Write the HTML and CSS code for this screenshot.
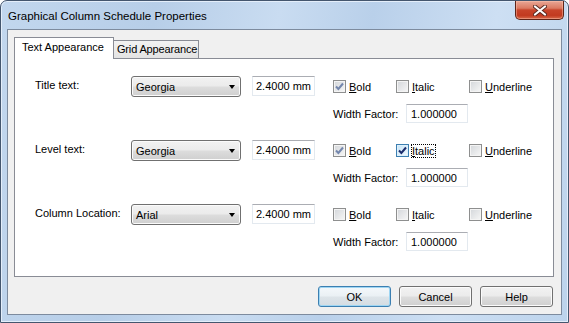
FILE: index.html
```html
<!DOCTYPE html>
<html lang="en">
<head>
    <meta charset="UTF-8">
    <title>Graphical Column Schedule Properties</title>
    <link rel="stylesheet" href="styles.css">
</head>
<body>
<div class="window">
    <div class="titlebar">
        <span class="title">Graphical Column Schedule Properties</span>
        <div class="close">
            <svg width="14" height="11" viewBox="0 0 14 11">
                <path d="M2 1.5 L12 9.5 M12 1.5 L2 9.5" stroke="#5a2a22" stroke-width="4" stroke-linecap="round"/>
                <path d="M2 1.5 L12 9.5 M12 1.5 L2 9.5" stroke="#fff" stroke-width="2.2" stroke-linecap="round"/>
            </svg>
        </div>
    </div>

    <div class="client">
        <div class="tabs">
            <div class="tab active">Text Appearance</div>
            <div class="tab">Grid Appearance</div>
        </div>

        <div class="panel">
            <div class="group">
                <div class="label">Title text:</div>
                <div class="combo">Georgia<span class="arrow"></span></div>
                <div class="textbox size">2.4000 mm</div>
                <div class="opts">
                    <div class="checks">
                        <div class="check bold"><span class="box checked grey"><svg width="11" height="11" viewBox="0 0 11 11"><path d="M2 5.5 L4.4 8 L9 2.5" fill="none" stroke-width="2"/></svg></span><span><u>B</u>old</span></div>
                        <div class="check italic"><span class="box"></span><span><u>I</u>talic</span></div>
                        <div class="check"><span class="box"></span><span><u>U</u>nderline</span></div>
                    </div>
                    <div class="factor">
                        <span class="factor-label">Width Factor:</span>
                        <div class="textbox factor-box">1.000000</div>
                    </div>
                </div>
            </div>

            <div class="group">
                <div class="label">Level text:</div>
                <div class="combo">Georgia<span class="arrow"></span></div>
                <div class="textbox size">2.4000 mm</div>
                <div class="opts">
                    <div class="checks">
                        <div class="check bold"><span class="box checked grey"><svg width="11" height="11" viewBox="0 0 11 11"><path d="M2 5.5 L4.4 8 L9 2.5" fill="none" stroke-width="2"/></svg></span><span><u>B</u>old</span></div>
                        <div class="check italic"><span class="box checked hot"><svg width="11" height="11" viewBox="0 0 11 11"><path d="M2 5.5 L4.4 8 L9 2.5" fill="none" stroke-width="2"/></svg></span><span class="focus"><u>I</u>talic</span></div>
                        <div class="check"><span class="box"></span><span><u>U</u>nderline</span></div>
                    </div>
                    <div class="factor">
                        <span class="factor-label">Width Factor:</span>
                        <div class="textbox factor-box">1.000000</div>
                    </div>
                </div>
            </div>

            <div class="group">
                <div class="label">Column Location:</div>
                <div class="combo">Arial<span class="arrow"></span></div>
                <div class="textbox size">2.4000 mm</div>
                <div class="opts">
                    <div class="checks">
                        <div class="check bold"><span class="box"></span><span><u>B</u>old</span></div>
                        <div class="check italic"><span class="box"></span><span><u>I</u>talic</span></div>
                        <div class="check"><span class="box"></span><span><u>U</u>nderline</span></div>
                    </div>
                    <div class="factor">
                        <span class="factor-label">Width Factor:</span>
                        <div class="textbox factor-box">1.000000</div>
                    </div>
                </div>
            </div>
        </div>

        <div class="buttons">
            <button class="btn default">OK</button>
            <button class="btn">Cancel</button>
            <button class="btn">Help</button>
        </div>
    </div>
</div>
</body>
</html>
```

FILE: styles.css
```css
*{
    box-sizing: border-box;
}
body{
    margin: 0;
    width: 569px;
    height: 323px;
    font-family: "Liberation Sans", Arial, sans-serif;
    font-size: 11px;
    color: #000;
    background: #ffffff;
}
.window{
    width: 569px;
    height: 323px;
    display: flex;
    flex-direction: column;
    border: 1px solid #44566e;
    border-radius: 7px 7px 0 0;
    background: linear-gradient(100deg, #c2d7ee 0%, #b7cee8 25%, #c9dcf1 45%, #b9d0ea 60%, #cddff3 80%, #bcd3ec 100%);
    box-shadow: inset 0 0 0 1px #e4eefa;
}
.titlebar{
    height: 28px;
    display: flex;
    justify-content: space-between;
    align-items: flex-start;
    padding: 0 4px 0 7px;
}
.title{
    margin-top: 9px;
    font-size: 11.5px;
    color: #000;
}
.close{
    width: 49px;
    height: 19px;
    display: flex;
    align-items: center;
    justify-content: center;
    border: 1px solid #5e2418;
    border-top: none;
    border-radius: 0 0 5px 5px;
    background: linear-gradient(#e9a796 0%, #db7a62 40%, #c8442a 50%, #c23a20 80%, #d7694a 100%);
    box-shadow: inset 0 0 0 1px rgba(255, 200, 180, 0.45);
}
.client{
    flex: 1;
    margin: 0 6px 7px 6px;
    display: flex;
    flex-direction: column;
    padding: 7px 7px 7px 6px;
    background: #f0f0f0;
    border: 1px solid #7d8b9e;
}
.tabs{
    display: flex;
    align-items: flex-end;
    height: 21px;
    position: relative;
    z-index: 1;
    white-space: nowrap;
}
.tab{
    height: 18px;
    padding: 2px 1px 0 3px;
    border: 1px solid #898c95;
    border-bottom: none;
    background: linear-gradient(#f2f2f2, #e3e3e3);
    margin-left: -1px;
    letter-spacing: -0.15px;
}
.tab.active{
    height: 22px;
    margin-left: 0;
    margin-bottom: -1px;
    padding: 3px 9px 0 7px;
    background: #fff;
    position: relative;
    z-index: 2;
    letter-spacing: 0;
}
.panel{
    flex: 1;
    background: #fff;
    border: 1px solid #898c95;
    padding: 17px 10px 0 20px;
    display: flex;
    flex-direction: column;
    gap: 17px;
}
.group{
    display: flex;
    align-items: flex-start;
    white-space: nowrap;
}
.label{
    width: 96px;
    line-height: 18px;
}
.combo{
    width: 110px;
    height: 21px;
    display: flex;
    align-items: center;
    justify-content: space-between;
    padding: 1px 5px 0 4px;
    border: 1px solid #707070;
    border-radius: 3px;
    background: linear-gradient(#f2f2f2 0%, #ebebeb 48%, #dddddd 52%, #cfcfcf 100%);
    box-shadow: inset 0 0 0 1px #fbfbfb;
}
.arrow{
    width: 0;
    height: 0;
    border-left: 3.5px solid transparent;
    border-right: 3.5px solid transparent;
    border-top: 4px solid #000;
}
.textbox{
    height: 20px;
    display: flex;
    align-items: center;
    padding: 0 4px;
    background: #fff;
    border: 1px solid #e3e9ef;
    border-top-color: #abadb3;
}
.size{
    width: 63px;
    margin-left: 11px;
    padding: 0 3px;
}
.opts{
    margin-left: 18px;
    display: flex;
    flex-direction: column;
}
.checks{
    display: flex;
    height: 21px;
    align-items: center;
}
.check{
    display: flex;
    align-items: center;
    gap: 3px;
    width: 73px;
}
.check.bold{
    width: 63px;
}
.box{
    width: 13px;
    height: 13px;
    border: 1px solid #8e8f8f;
    background: linear-gradient(135deg, #d3d6da, #f7f7f7);
    box-shadow: inset 0 0 0 1px #f4f4f4;
    display: flex;
}
.box.grey path{
    stroke: #7487ad;
}
.box.hot{
    border-color: #3c7fb1;
    background: linear-gradient(135deg, #c6e4f7, #f1f9fe);
    box-shadow: inset 0 0 0 1px #def0fb;
}
.box.hot path{
    stroke: #1c2c6c;
}
.focus{
    outline: 1px dotted #000;
}
.factor{
    display: flex;
    align-items: center;
    margin-top: 7px;
}
.factor-label{
    width: 73px;
}
.factor-box{
    width: 62px;
    height: 19px;
}
.buttons{
    display: flex;
    justify-content: flex-end;
    gap: 8px;
    margin-top: 9px;
    padding-right: 1px;
}
.btn{
    width: 73px;
    height: 21px;
    font-family: "Liberation Sans", Arial, sans-serif;
    font-size: 11px;
    color: #000;
    border: 1px solid #707070;
    border-radius: 3px;
    background: linear-gradient(#f2f2f2 0%, #ebebeb 48%, #dddddd 52%, #cfcfcf 100%);
    box-shadow: inset 0 0 0 1px #fbfbfb;
    padding: 0;
}
.btn.default{
    border-color: #3c7fb1;
    box-shadow: inset 0 0 0 1px #9fd6f3;
    background: linear-gradient(#f4f8fb 0%, #eaf0f4 48%, #dde4e9 52%, #d4dce2 100%);
}
```
